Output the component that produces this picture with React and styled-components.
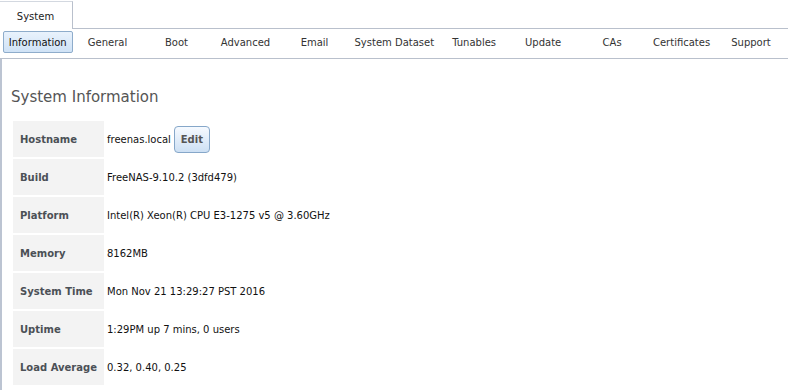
import React from 'react';
import styled, {createGlobalStyle} from 'styled-components';

const GlobalStyle = createGlobalStyle`
    body {
        margin: 0;
        background: #fff;
        font-family: "DejaVu Sans", Verdana, sans-serif;
        font-size: 10px;
        color: #222;
    }
`;

const SUB_TABS = [
    'Information', 'General', 'Boot', 'Advanced', 'Email', 'System Dataset',
    'Tunables', 'Update', 'CAs', 'Certificates', 'Support',
];

const ROWS = [
    {label: 'Hostname', value: 'freenas.local', editable: true},
    {label: 'Build', value: 'FreeNAS-9.10.2 (3dfd479)'},
    {label: 'Platform', value: 'Intel(R) Xeon(R) CPU E3-1275 v5 @ 3.60GHz'},
    {label: 'Memory', value: '8162MB'},
    {label: 'System Time', value: 'Mon Nov 21 13:29:27 PST 2016'},
    {label: 'Uptime', value: '1:29PM up 7 mins, 0 users'},
    {label: 'Load Average', value: '0.32, 0.40, 0.25'},
];

const App = () => {
    return (
        <>
            <GlobalStyle />
            <TabStrip>
                <TopTab>System</TopTab>
                <TabFiller />
            </TabStrip>
            <SubNav>
                {SUB_TABS.map((t, i) => (
                    <SubTab key={t} $active={i === 0}>{t}</SubTab>
                ))}
            </SubNav>
            <Content>
                <Heading>System Information</Heading>
                <InfoTable>
                    <tbody>
                        {ROWS.map(row => (
                            <tr key={row.label}>
                                <Label>{row.label}</Label>
                                <Value>
                                    {row.value}
                                    {row.editable && <EditButton>Edit</EditButton>}
                                </Value>
                            </tr>
                        ))}
                    </tbody>
                </InfoTable>
            </Content>
        </>
    );
};

const TabStrip = styled.div`
    display: flex;
    height: 29px;
`;

const TopTab = styled.div`
    width: 73px;
    height: 28px;
    margin-top: 1px;
    box-sizing: border-box;
    border-top: 1px solid #d3d8e0;
    border-right: 1px solid #b9c0cc;
    background: #fff;
    display: flex;
    align-items: center;
    justify-content: center;
    padding: 2px 1px 0 0;
    color: #222;
`;

const TabFiller = styled.div`
    flex: 1;
    border-bottom: 1px solid #b9c0cc;
`;

const SubNav = styled.div`
    display: flex;
    align-items: flex-start;
    gap: 1px;
    height: 30px;
    padding: 2px 3px 0;
    box-sizing: border-box;
    border-bottom: 1px solid #b9c0cc;
`;

const SubTab = styled.div`
    min-width: 68px;
    height: 22px;
    box-sizing: border-box;
    padding: 0 7px;
    display: flex;
    align-items: center;
    justify-content: center;
    white-space: nowrap;
    border: 1px solid ${p => (p.$active ? '#8eaccb' : 'transparent')};
    border-radius: 2px;
    background: ${p => (p.$active ? 'linear-gradient(#e9f2fc, #cfe2f6)' : 'transparent')};
    color: ${p => (p.$active ? '#111' : '#333')};
`;

const Content = styled.div`
    border-left: 2px solid #bcc4d2;
    padding: 28px 0 0 9px;
    min-height: 320px;
`;

const Heading = styled.h2`
    margin: 0 0 12px;
    font-size: 15px;
    line-height: 20px;
    font-weight: normal;
    color: #555;
`;

const InfoTable = styled.table`
    border-spacing: 2px;
    border-collapse: separate;
`;

const Label = styled.td`
    width: 77px;
    height: 36px;
    padding: 0 7px;
    background: #f3f3f3;
    font-weight: bold;
    color: #4b5056;
    white-space: nowrap;
    vertical-align: middle;
`;

const Value = styled.td`
    padding: 0 0 0 1px;
    color: #111;
    white-space: nowrap;
    vertical-align: middle;
`;

const EditButton = styled.button`
    margin-left: 3px;
    width: 36px;
    height: 27px;
    box-sizing: border-box;
    border: 1px solid #86a7c9;
    border-radius: 4px;
    background: linear-gradient(#f6faff, #cde0f4);
    font-family: "DejaVu Sans", Verdana, sans-serif;
    font-size: 10px;
    font-weight: bold;
    color: #555;
    padding: 0;
    vertical-align: middle;
    cursor: pointer;
`;

export default App;
